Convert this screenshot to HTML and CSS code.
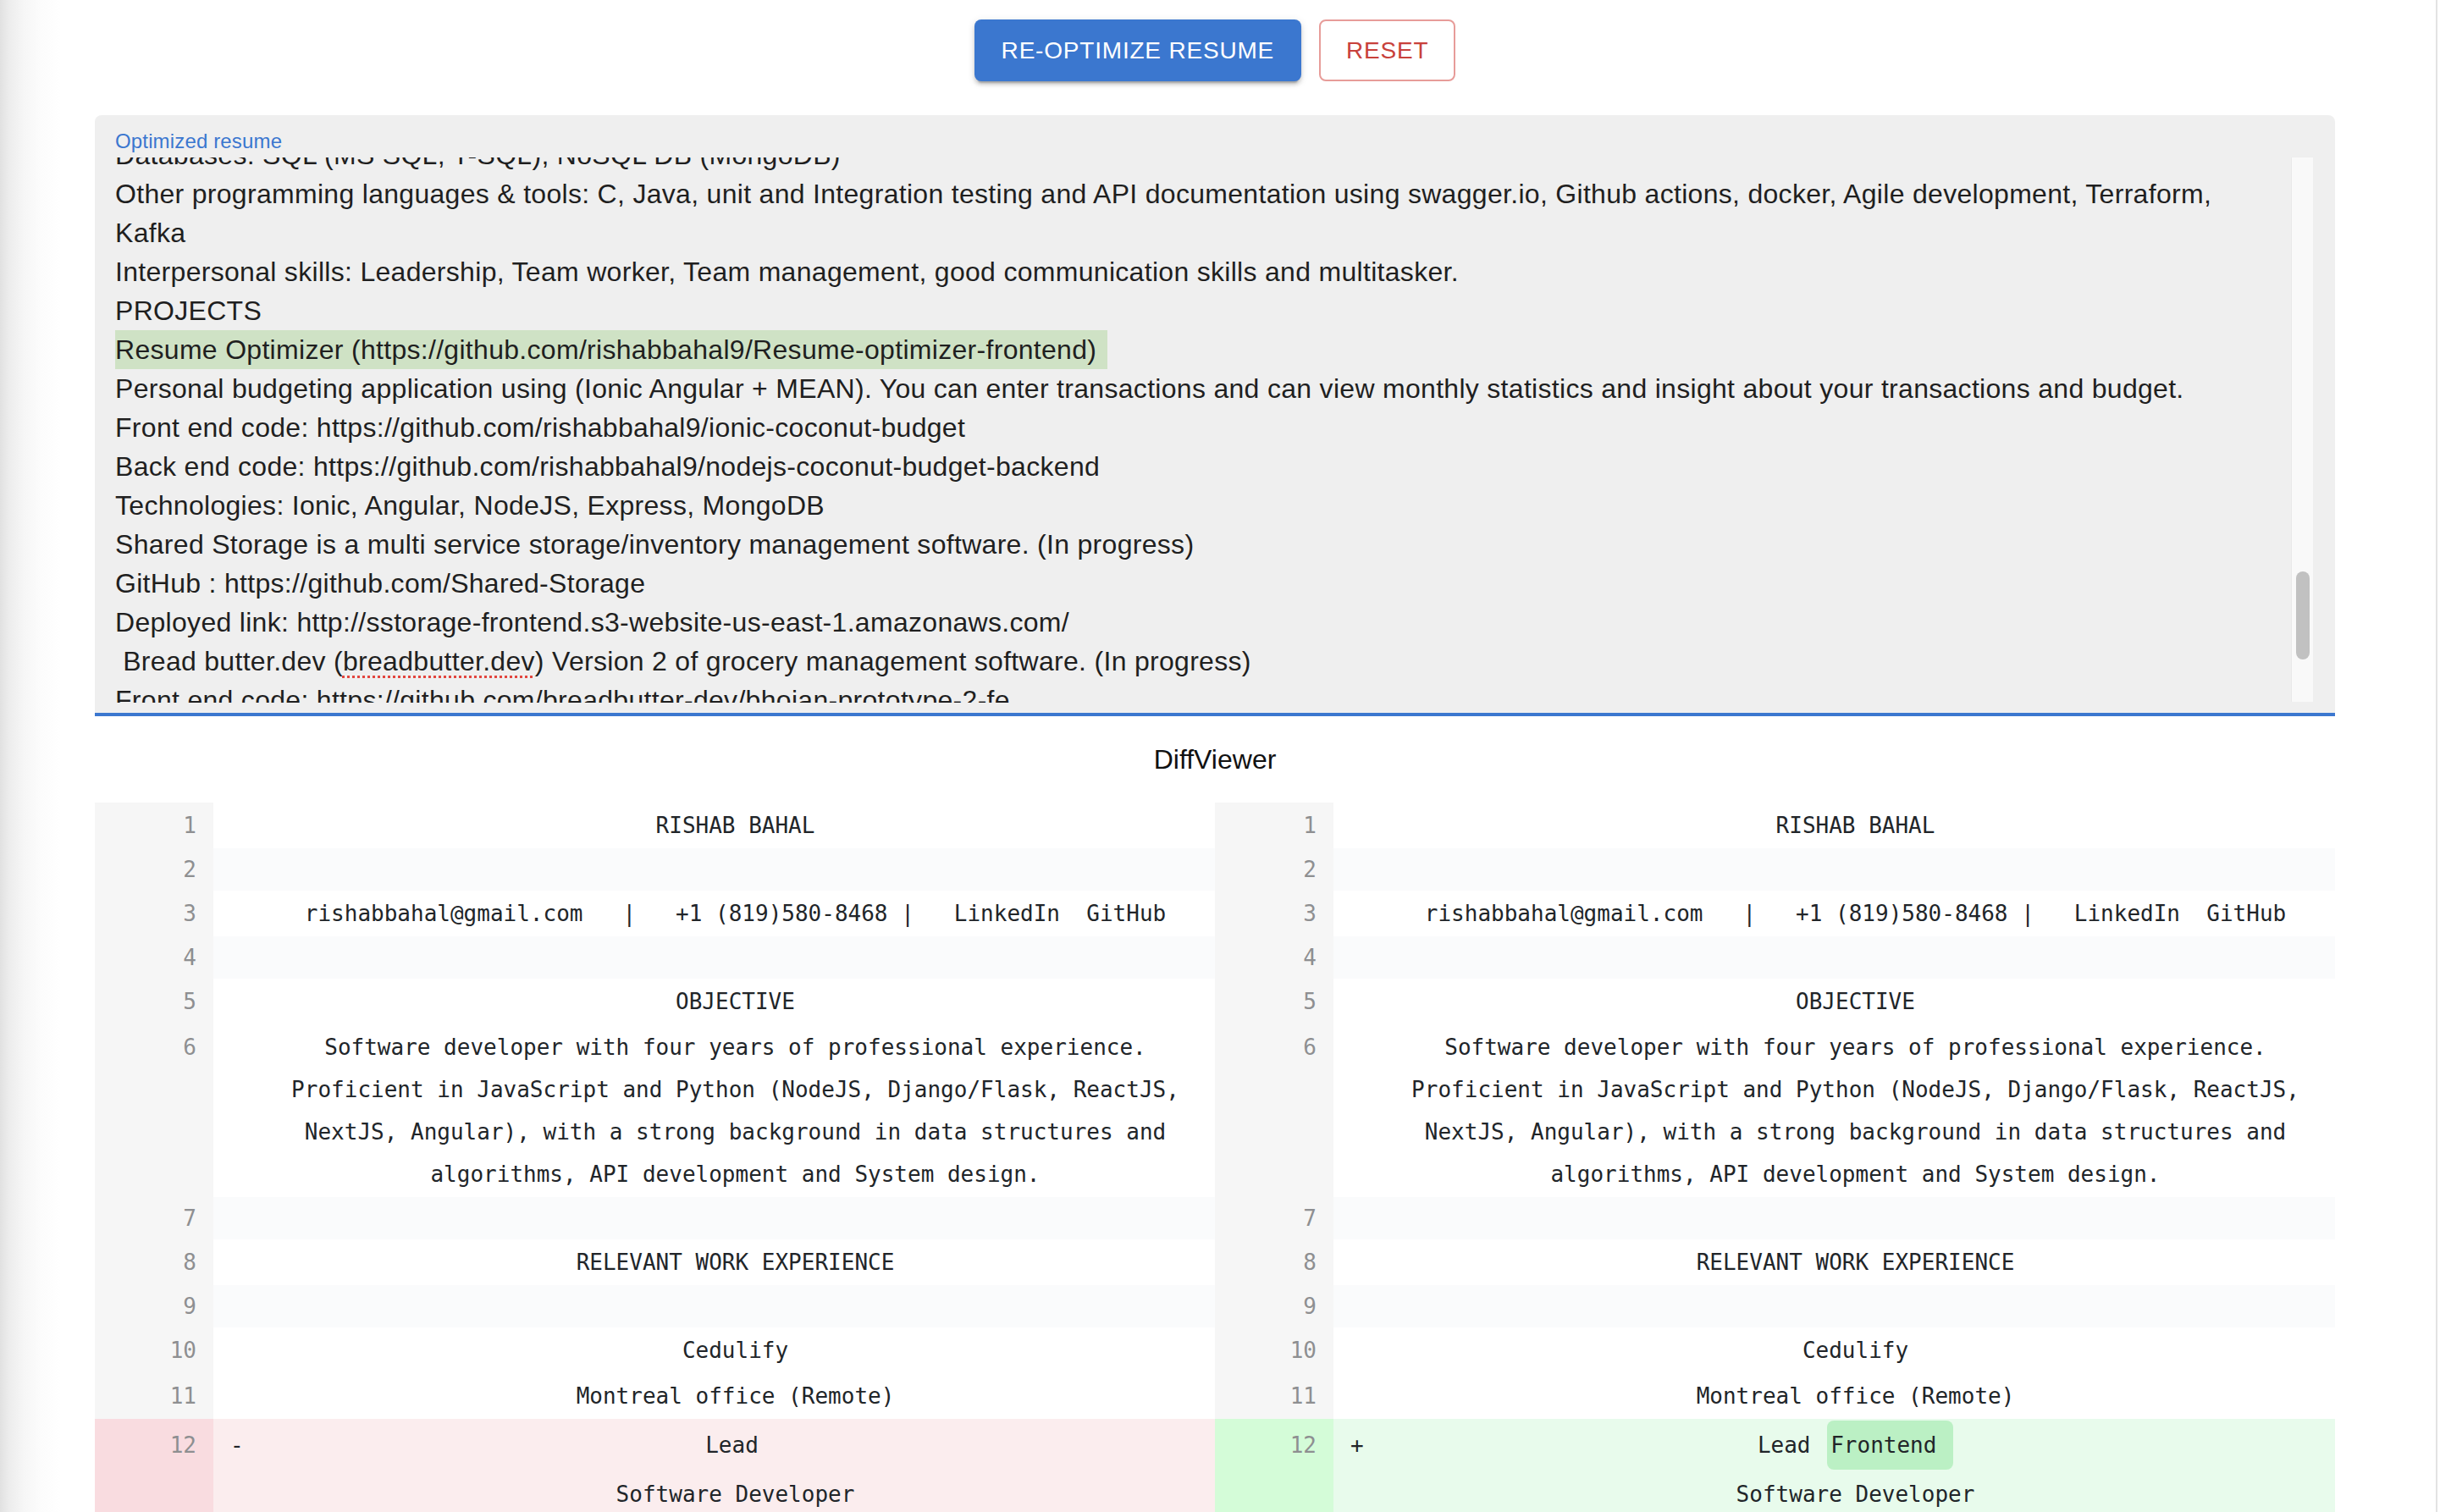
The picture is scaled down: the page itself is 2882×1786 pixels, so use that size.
FILE: index.html
```html
<!DOCTYPE html>
<html lang="en">
<head>
<meta charset="utf-8">
<title>Resume Optimizer</title>
<link rel="stylesheet" href="styles.css">
</head>
<body>
<main class="page">
  <div class="actions">
    <button class="btn btn-primary" type="button">RE-OPTIMIZE RESUME</button>
    <button class="btn btn-outline" type="button">RESET</button>
  </div>

  <div class="field">
    <label class="field-label">Optimized resume</label>
    <div class="field-body">
      <div class="field-viewport">
        <div class="field-text">
          <div class="ln">Databases: SQL (MS SQL, T-SQL), NoSQL DB (MongoDB)</div>
          <div class="ln">Other programming languages &amp; tools: C, Java, unit and Integration testing and API documentation using swagger.io, Github actions, docker, Agile development, Terraform,</div>
          <div class="ln">Kafka</div>
          <div class="ln">Interpersonal skills: Leadership, Team worker, Team management, good communication skills and multitasker.</div>
          <div class="ln">PROJECTS</div>
          <div class="ln"><span class="sel">Resume Optimizer (https://github.com/rishabbahal9/Resume-optimizer-frontend)</span></div>
          <div class="ln">Personal budgeting application using (Ionic Angular + MEAN). You can enter transactions and can view monthly statistics and insight about your transactions and budget.</div>
          <div class="ln">Front end code: https://github.com/rishabbahal9/ionic-coconut-budget</div>
          <div class="ln">Back end code: https://github.com/rishabbahal9/nodejs-coconut-budget-backend</div>
          <div class="ln">Technologies: Ionic, Angular, NodeJS, Express, MongoDB</div>
          <div class="ln">Shared Storage is a multi service storage/inventory management software. (In progress)</div>
          <div class="ln">GitHub : https://github.com/Shared-Storage</div>
          <div class="ln">Deployed link: http://sstorage-frontend.s3-website-us-east-1.amazonaws.com/</div>
          <div class="ln"> Bread butter.dev (<span class="spell">breadbutter.dev</span>) Version 2 of grocery management software. (In progress)</div>
          <div class="ln">Front end code: https://github.com/breadbutter-dev/bhojan-prototype-2-fe</div>
        </div>
      </div>
      <div class="scrolltrack"><div class="scrollthumb"></div></div>
    </div>
  </div>

  <h2 class="diff-title">DiffViewer</h2>

  <table class="diff">
    <colgroup>
      <col class="c-gutter"><col class="c-marker"><col class="c-content">
      <col class="c-gutter"><col class="c-marker"><col class="c-content">
    </colgroup>
    <tbody>
      <tr class="text">
        <td class="gutter">1</td><td class="marker"><div class="code">&nbsp;</div></td><td class="content"><div class="code">RISHAB BAHAL</div></td>
        <td class="gutter">1</td><td class="marker"><div class="code">&nbsp;</div></td><td class="content"><div class="code">RISHAB BAHAL</div></td>
      </tr>
      <tr class="empty">
        <td class="gutter">2</td><td class="marker"><div class="code">&nbsp;</div></td><td class="content"><div class="code">&nbsp;</div></td>
        <td class="gutter">2</td><td class="marker"><div class="code">&nbsp;</div></td><td class="content"><div class="code">&nbsp;</div></td>
      </tr>
      <tr class="text">
        <td class="gutter">3</td><td class="marker"><div class="code">&nbsp;</div></td><td class="content"><div class="code">rishabbahal@gmail.com   |   +1 (819)580-8468 |   LinkedIn  GitHub</div></td>
        <td class="gutter">3</td><td class="marker"><div class="code">&nbsp;</div></td><td class="content"><div class="code">rishabbahal@gmail.com   |   +1 (819)580-8468 |   LinkedIn  GitHub</div></td>
      </tr>
      <tr class="empty">
        <td class="gutter">4</td><td class="marker"><div class="code">&nbsp;</div></td><td class="content"><div class="code">&nbsp;</div></td>
        <td class="gutter">4</td><td class="marker"><div class="code">&nbsp;</div></td><td class="content"><div class="code">&nbsp;</div></td>
      </tr>
      <tr class="text">
        <td class="gutter">5</td><td class="marker"><div class="code">&nbsp;</div></td><td class="content"><div class="code">OBJECTIVE</div></td>
        <td class="gutter">5</td><td class="marker"><div class="code">&nbsp;</div></td><td class="content"><div class="code">OBJECTIVE</div></td>
      </tr>
      <tr class="text">
        <td class="gutter">6</td><td class="marker"><div class="code">&nbsp;</div></td><td class="content"><div class="code">Software developer with four years of professional experience.<br>Proficient in JavaScript and Python (NodeJS, Django/Flask, ReactJS,<br>NextJS, Angular), with a strong background in data structures and<br>algorithms, API development and System design.</div></td>
        <td class="gutter">6</td><td class="marker"><div class="code">&nbsp;</div></td><td class="content"><div class="code">Software developer with four years of professional experience.<br>Proficient in JavaScript and Python (NodeJS, Django/Flask, ReactJS,<br>NextJS, Angular), with a strong background in data structures and<br>algorithms, API development and System design.</div></td>
      </tr>
      <tr class="empty">
        <td class="gutter">7</td><td class="marker"><div class="code">&nbsp;</div></td><td class="content"><div class="code">&nbsp;</div></td>
        <td class="gutter">7</td><td class="marker"><div class="code">&nbsp;</div></td><td class="content"><div class="code">&nbsp;</div></td>
      </tr>
      <tr class="text">
        <td class="gutter">8</td><td class="marker"><div class="code">&nbsp;</div></td><td class="content"><div class="code">RELEVANT WORK EXPERIENCE</div></td>
        <td class="gutter">8</td><td class="marker"><div class="code">&nbsp;</div></td><td class="content"><div class="code">RELEVANT WORK EXPERIENCE</div></td>
      </tr>
      <tr class="empty">
        <td class="gutter">9</td><td class="marker"><div class="code">&nbsp;</div></td><td class="content"><div class="code">&nbsp;</div></td>
        <td class="gutter">9</td><td class="marker"><div class="code">&nbsp;</div></td><td class="content"><div class="code">&nbsp;</div></td>
      </tr>
      <tr class="text">
        <td class="gutter">10</td><td class="marker"><div class="code">&nbsp;</div></td><td class="content"><div class="code">Cedulify</div></td>
        <td class="gutter">10</td><td class="marker"><div class="code">&nbsp;</div></td><td class="content"><div class="code">Cedulify</div></td>
      </tr>
      <tr class="text">
        <td class="gutter">11</td><td class="marker"><div class="code">&nbsp;</div></td><td class="content"><div class="code">Montreal office (Remote)</div></td>
        <td class="gutter">11</td><td class="marker"><div class="code">&nbsp;</div></td><td class="content"><div class="code">Montreal office (Remote)</div></td>
      </tr>
      <tr class="text changed">
        <td class="gutter removed">12</td><td class="marker removed"><div class="code">-</div></td><td class="content removed"><div class="code">Lead<span class="w-gap">&#8203;</span><br>Software Developer</div></td>
        <td class="gutter added">12</td><td class="marker added"><div class="code">+</div></td><td class="content added"><div class="code">Lead <span class="w-add">Frontend&nbsp;</span><br>Software Developer</div></td>
      </tr>
    </tbody>
  </table>
</main>
</body>
</html>
```

FILE: styles.css
```css
html {
  overflow: hidden;
}

body {
  margin: 0;
  min-height: 100vh;
  background-color: #ffffff;
  background-image:
    linear-gradient(to right, transparent 2877px, #e3e3e3 2877px, #e3e3e3 2879px, transparent 2879px),
    linear-gradient(to right, #e1e1e1 0, #ececec 10px, #f6f6f6 28px, #fcfcfc 48px, #ffffff 72px);
  font-family: "Liberation Sans", Arial, sans-serif;
  color: #1f1f1f;
}

.page {
  width: 2646px;
  margin-left: 112px;
}

/* ---------- action buttons ---------- */
.actions {
  display: flex;
  justify-content: center;
  gap: 21px;
  padding-top: 23px;
}

.btn {
  font-family: "Liberation Sans", Arial, sans-serif;
  font-size: 28px;
  font-weight: 400;
  letter-spacing: 0.8px;
  line-height: 49px;
  border-radius: 8px;
  cursor: pointer;
  text-transform: uppercase;
}

.btn-primary {
  padding: 12px 32px;
  border: none;
  background: #3b77cf;
  color: #ffffff;
  box-shadow: 0 6px 2px -4px rgba(0, 0, 0, 0.2), 0 4px 4px 0 rgba(0, 0, 0, 0.14), 0 2px 10px 0 rgba(0, 0, 0, 0.12);
}

.btn-outline {
  padding: 10px 30px;
  border: 2px solid #e79c99;
  background: #ffffff;
  color: #c8413b;
}

/* ---------- filled text field ---------- */
.field {
  margin-top: 40px;
  background: #efefef;
  border-radius: 8px 8px 0 0;
  padding: 14px 26px 12px 24px;
  border-bottom: 4px solid #3b77cf;
}

.field-label {
  display: block;
  font-size: 24px;
  line-height: 34px;
  letter-spacing: 0.15px;
  color: #3b77cf;
  margin-bottom: 2px;
}

.field-body {
  display: flex;
  height: 644px;
}

.field-viewport {
  flex: 1;
  overflow: hidden;
}

.field-text {
  margin-top: -26px;
  font-size: 32px;
  line-height: 46px;
  letter-spacing: 0.3px;
  color: #1f1f1f;
}

.ln {
  white-space: pre;
  height: 46px;
}

.sel {
  display: inline-block;
  line-height: 46px;
  background: #cfe2c5;
  padding-right: 13px;
}

.spell {
  text-decoration: underline dotted #e2463f;
  text-decoration-thickness: 3px;
  text-underline-offset: 6px;
}

.scrolltrack {
  width: 26px;
  height: 643px;
  box-sizing: border-box;
  background: #f9f9f9;
  border-left: 1px solid #e9e9e9;
  padding-left: 5px;
}

.scrollthumb {
  margin-top: 489px;
  width: 16px;
  height: 104px;
  border-radius: 8px;
  background: #c1c1c1;
}

/* ---------- diff viewer ---------- */
.diff-title {
  margin: 28px 0;
  font-size: 32px;
  font-weight: 400;
  line-height: 46px;
  text-align: center;
  color: #111111;
}

.diff {
  width: 2646px;
  table-layout: fixed;
  border-collapse: collapse;
  border-spacing: 0;
  font-family: "DejaVu Sans Mono", "Liberation Mono", monospace;
  font-size: 26px;
  color: #212529;
}

.c-gutter { width: 140px; }
.c-marker { width: 50px; }
.c-content { width: 1133px; }

.diff td {
  vertical-align: baseline;
  padding: 0;
}

.diff tr.text td {
  padding-top: 2px;
  padding-bottom: 2px;
}

.diff td.gutter {
  background: #f6f6f6;
  color: #8e8f91;
  text-align: right;
  line-height: 50px;
  padding-left: 20px;
  padding-right: 20px;
}

.diff td.marker {
  padding-left: 20px;
}

.code {
  line-height: 50px;
  white-space: pre-wrap;
}

.content .code {
  text-align: center;
}

.diff tr.empty td.marker,
.diff tr.empty td.content {
  background: #fafbfc;
}

.diff td.gutter.removed { background: #f9dce0; }
.diff td.marker.removed,
.diff td.content.removed { background: #fbedee; }

.diff td.gutter.added { background: #d4fcd8; }
.diff td.marker.added,
.diff td.content.added { background: #e8fbec; }

.w-add {
  display: inline-flex;
  padding: 4px;
  margin-left: 4px;
  margin-bottom: 4px;
  border-radius: 8px;
  background: #bbf0c4;
  white-space: pre;
}

.w-gap {
  display: inline-flex;
  padding: 4px;
  margin-bottom: 4px;
}
```
